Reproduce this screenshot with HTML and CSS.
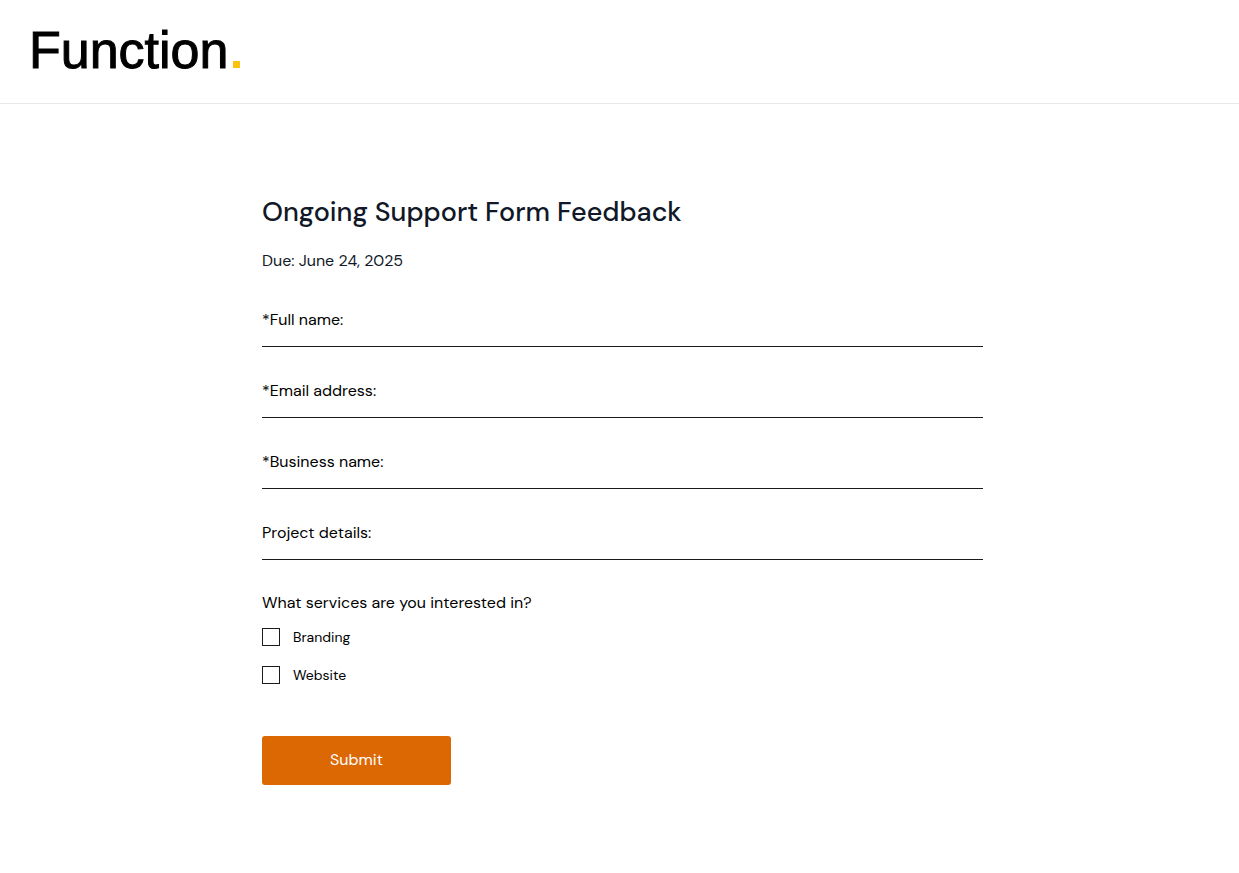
FILE: index.html
```html
<!DOCTYPE html>
<html lang="en">
<head>
  <meta charset="UTF-8" />
  <meta name="viewport" content="width=device-width, initial-scale=1.0" />
  <title>Ongoing Support Form Feedback</title>
  <link rel="stylesheet" href="styles.css">
</head>
<body>
  <header class="site-header">
    <div class="logo">Function<span class="logo-dot"></span></div>
  </header>

  <main class="content">
    <h1 class="title">Ongoing Support Form Feedback</h1>
    <p class="due">Due: June 24, 2025</p>

    <form class="form">
      <div class="field">
        <label for="name">*Full name:</label>
        <input type="text" id="name" name="name" required>
      </div>
      <div class="field">
        <label for="email">*Email address:</label>
        <input type="email" id="email" name="email" required>
      </div>
      <div class="field">
        <label for="business">*Business name:</label>
        <input type="text" id="business" name="business" required>
      </div>
      <div class="field">
        <label for="details">Project details:</label>
        <input type="text" id="details" name="details">
      </div>

      <fieldset class="services">
        <legend>What services are you interested in?</legend>
        <div class="option">
          <input type="checkbox" id="branding" name="services" value="branding">
          <label for="branding">Branding</label>
        </div>
        <div class="option">
          <input type="checkbox" id="website" name="services" value="website">
          <label for="website">Website</label>
        </div>
      </fieldset>

      <button type="submit" class="submit">Submit</button>
    </form>
  </main>
</body>
</html>
```

FILE: styles.css
```css
* {
  box-sizing: border-box;
}

body {
  margin: 0;
  background: #fff;
  color: #000;
  font-family: "DM Sans", Inter, "Liberation Sans", sans-serif;
  font-size: 16px;
  line-height: 20px;
}

/* Header */
.site-header {
  padding: 20px 29px 23px;
  border-bottom: 1px solid #e8e8ea;
}

.logo {
  display: flex;
  align-items: baseline;
  gap: 5px;
  font-family: "Liberation Sans", Arial, sans-serif;
  font-size: 52px;
  line-height: 60px;
  -webkit-text-stroke: 1px #000;
}

.logo-dot {
  width: 7px;
  height: 7px;
  background: #fbc10f;
}

/* Form page */
.content {
  max-width: 727px;
  margin: 0 auto;
  padding: 88px 0 88px 6px;
}

.title {
  margin: 0;
  color: #111827;
  font-size: 27px;
  font-weight: 500;
  line-height: 40px;
}

.due {
  margin: 19px 0 15px;
  color: #111827;
}

.field {
  display: flex;
  gap: 8px;
  padding: 24px 0 16px;
  margin-bottom: 10px;
  border-bottom: 1px solid #1b1b1b;
}

.field input {
  flex: 1;
  min-width: 0;
  height: 20px;
  padding: 0;
  border: 0;
  outline: 0;
  background: transparent;
  font: inherit;
}

.services {
  margin: 33px 0 52px;
  padding: 0;
  border: 0;
}

.services legend {
  padding: 0;
  margin-bottom: 15px;
}

.option {
  display: flex;
  align-items: center;
  gap: 13px;
  font-size: 14px;
  line-height: 18px;
}

.option + .option {
  margin-top: 20px;
}

.option input {
  appearance: none;
  width: 18px;
  height: 18px;
  margin: 0;
  border: 1px solid #1b1b1b;
  background: #fff;
}

.option input:checked {
  background: #dc6803;
}

.submit {
  display: block;
  width: 189px;
  height: 49px;
  padding: 0 0 2px;
  border: 0;
  border-radius: 3px;
  background: #dc6803;
  color: #fff;
  font-family: inherit;
  font-size: 16px;
  cursor: pointer;
}
```
